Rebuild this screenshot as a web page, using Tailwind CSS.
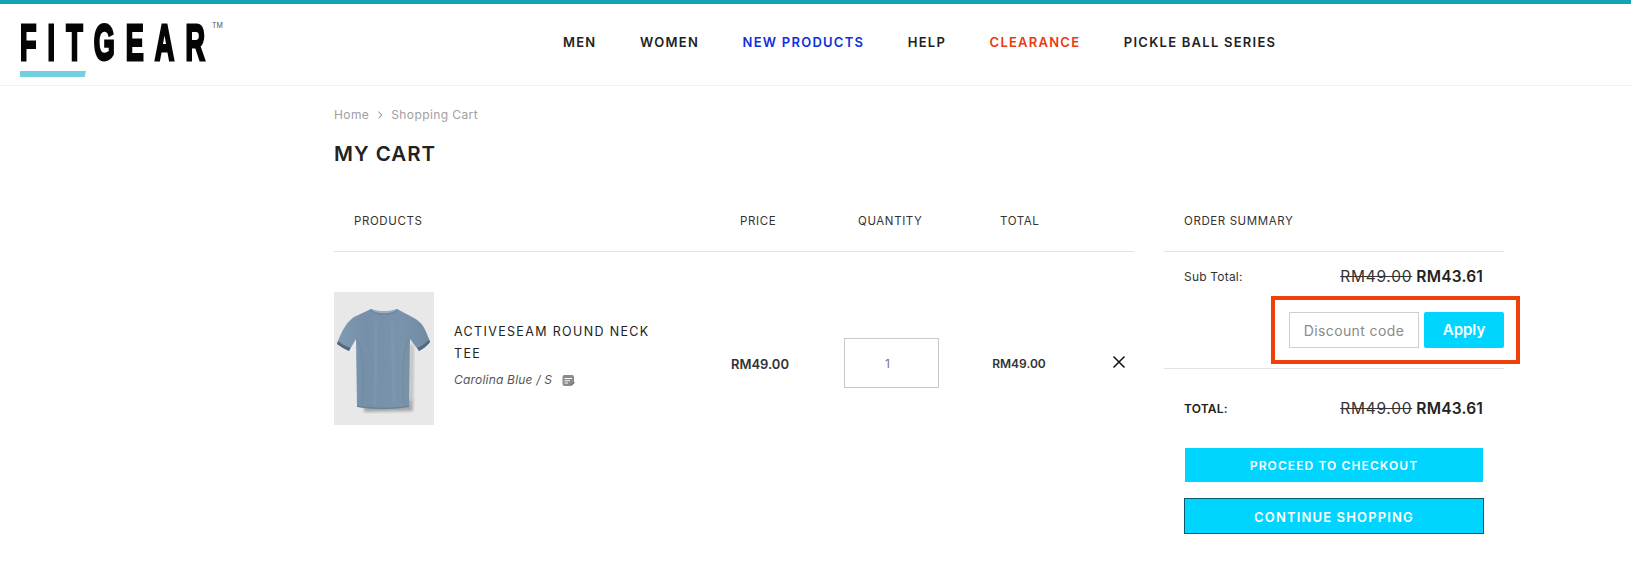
<!doctype html>
<html lang="en">
<head>
<meta charset="utf-8">
<title>My Cart</title>
<script src="https://cdn.jsdelivr.net/npm/@tailwindcss/browser@4"></script>
</head>
<body class="bg-white font-['Inter',sans-serif] text-[#222] overflow-hidden">
<div class="relative w-[1631px] h-[579px] overflow-hidden">
  <div class="h-1 bg-[#14a2b8]"></div>
  <header class="relative flex h-[82px] border-b border-[#f0f0f0]">
    <a class="relative block w-[320px] pl-[20px] pt-[10px]">
      <span class="block origin-left scale-x-[.54] w-[350px] whitespace-nowrap font-['Liberation_Sans',sans-serif] font-bold text-[50px] leading-[58px] tracking-[20.5px] text-[#050505] [-webkit-text-stroke:3px_#050505]">FITGEA<span class="tracking-normal">R</span></span>
      <span class="absolute left-[212px] top-[18px] text-[7px] leading-[8px] text-[#555]">TM</span>
      <span class="absolute left-[20px] top-[67px] w-[66px] h-[6px] bg-[#72d0e0] [clip-path:polygon(0_0,100%_0,98%_100%,0_100%)]"></span>
    </a>
    <nav class="flex items-center gap-[43.5px] pl-[243px] pb-[4px] text-[13px] font-semibold tracking-[1.25px] whitespace-nowrap">
      <a>MEN</a>
      <a>WOMEN</a>
      <a class="text-[#0f2fdc]">NEW PRODUCTS</a>
      <a>HELP</a>
      <a class="text-[#ea3a12]">CLEARANCE</a>
      <a>PICKLE BALL SERIES</a>
    </nav>
  </header>
  <main class="pl-[334px] w-[1631px]">
    <div class="flex items-center gap-[7px] pt-[21px] text-[12px] leading-[16px] tracking-[.4px] text-[#a0a0a0]">
      <span>Home</span>
      <svg class="w-[8px] h-[8px]" viewBox="0 0 8 8" fill="none" stroke="#777" stroke-width="1"><path d="M2.5 .8 5.8 4 2.5 7.2"/></svg>
      <span>Shopping Cart</span>
    </div>
    <h1 class="pt-[17px] text-[20.5px] leading-[28px] font-semibold tracking-[1px] text-[#222]">MY CART</h1>
    <div class="flex gap-[30px] pt-[28px]">
      <section class="w-[800px]">
        <div class="flex items-center h-[56px] pb-[4px] border-b border-[#e2e2e2] text-[11.5px] tracking-[.6px] text-[#333]">
          <span class="w-[406px] pl-[20px]">PRODUCTS</span>
          <span class="w-[118px]">PRICE</span>
          <span class="w-[142px]">QUANTITY</span>
          <span>TOTAL</span>
        </div>
        <div class="flex items-center pt-[40px]">
          <div class="w-[100px] h-[133px] bg-[#e8e8e8] shrink-0">
            <svg class="w-[100px] h-[133px]" viewBox="0 0 100 133">
              <defs>
                <linearGradient id="shirt" x1="0" x2="1" y1="0" y2="0">
                  <stop offset="0" stop-color="#7f9ab1"/>
                  <stop offset=".3" stop-color="#7590a8"/>
                  <stop offset=".7" stop-color="#7993ab"/>
                  <stop offset="1" stop-color="#708ba3"/>
                </linearGradient>
                <filter id="soft"><feGaussianBlur stdDeviation="1.8"/></filter>
                <filter id="photo"><feGaussianBlur stdDeviation=".35"/></filter>
              </defs>
              <path d="M30 112 78 108 79 119 30 120Z" fill="#8a8a8a" filter="url(#soft)" opacity=".7"/>
              <path d="M76 50 80 55 79 112 75 114Z" fill="#b5b5b5" filter="url(#soft)" opacity=".8"/>
              <g filter="url(#photo)">
                <path d="M37 17 C44 20 56 20 63 17 L80 26 C84 28 87 31 89 34 C92 39 94 44 96 50 C93 54 89 57 85 59 L76 47 L75 115 C60 118 38 118 23 115 L22 47 L15 59 C11 57 7 55 3 52 C5 45 8 39 12 33 C14 30 17 27 20 25Z" fill="url(#shirt)"/>
                <path d="M37 17 C44 20 56 20 63 17 L62 19 C55 22 45 22 38 19Z" fill="#9ab0c2"/>
                <path d="M37 17 C44 23 56 23 63 17 L64 18 C56 25 44 25 36 18Z" fill="#668199" opacity=".6"/>
                <path d="M3 52 C7 55 11 57 15 59 L16.5 56 C12 54 7 52 4 49ZM96 50 C93 54 89 57 85 59 L83.5 56 C88 54 92 51 95 47.5Z" fill="#516a80"/>
                <path d="M23 114 C38 117 60 117 75 114" stroke="#667f96" stroke-width="1" fill="none"/>
                <path d="M23 47 C30 60 30 90 28 112M75 47 C68 60 68 90 70 112" stroke="#6b869e" stroke-width="1.5" fill="none" opacity=".5"/>
                <path d="M42 30 41 112M58 30 60 112" stroke="#86a0b6" stroke-width="3" fill="none" opacity=".35"/>
              </g>
            </svg>
          </div>
          <div class="w-[233px] pl-[20px] pb-[8px] shrink-0">
            <p class="text-[12.5px] leading-[22px] tracking-[1.35px] text-[#222]">ACTIVESEAM ROUND NECK TEE</p>
            <p class="flex items-center gap-[10px] pt-[7px] text-[12px] leading-[16px] tracking-[.2px] italic text-[#555]">
              Carolina Blue / S
              <svg class="w-[13px] h-[13px]" viewBox="0 0 13 13" fill="none">
                <rect x="0.5" y="1" width="11.5" height="11" rx="2" fill="#8b8b8b"/>
                <path d="M2.5 4.5h7.5M2.5 6.8h5.5M2.5 9h3.5" stroke="#fff" stroke-width="1"/>
                <path d="M7.5 12 12.5 7.5v3L10 13H7.5Z" fill="#fff"/>
                <path d="M8.5 11.8 12.3 8.2" stroke="#666" stroke-width="1.2"/>
              </svg>
            </p>
          </div>
          <span class="w-[177px] pl-[9px] pt-[12px] text-[13px] font-semibold text-center text-[#333]">RM49.00</span>
          <div class="w-[95px] h-[50px] mt-[9px] pt-[2px] border border-[#c8c8c8] flex items-center justify-center pr-[8px] text-[12px] text-[#777] shrink-0">1</div>
          <span class="w-[160px] pt-[11px] text-[12px] font-semibold text-center text-[#333]">RM49.00</span>
          <svg class="w-[14px] h-[14px] ml-[13px] mt-[7px]" viewBox="0 0 14 14" stroke="#111" stroke-width="1.5" fill="none"><path d="M1.5 1.5 12.5 12.5M12.5 1.5 1.5 12.5"/></svg>
        </div>
      </section>
      <aside class="relative w-[340px]">
        <div class="flex items-center h-[56px] pb-[4px] pl-[20px] border-b border-[#e2e2e2] text-[11.5px] tracking-[.6px] text-[#333]">ORDER SUMMARY</div>
        <div class="flex items-center justify-between h-[50px] pl-[20px] pr-[21px]">
          <span class="text-[12px] tracking-[.2px] text-[#333]">Sub Total:</span>
          <span class="text-[15.5px] font-semibold tracking-[.2px]"><s class="font-normal tracking-[.75px] text-[#333]">RM49.00</s> RM43.61</span>
        </div>
        <div class="flex justify-end gap-[5px] pt-[10px] pb-[20px] border-b border-[#e2e2e2]">
          <div class="flex items-center justify-center w-[130px] h-[36px] border border-[#cfcfcf] text-[14px] tracking-[.4px] text-[#8a8a8a]">Discount code</div>
          <button class="w-[80px] h-[36px] rounded-[2px] bg-[#00d5ff] text-white text-[15px] font-semibold">Apply</button>
        </div>
        <div class="flex items-center justify-between h-[79px] pl-[20px] pr-[21px]">
          <span class="text-[12px] tracking-[.2px] font-semibold text-[#222]">TOTAL:</span>
          <span class="text-[15.5px] font-semibold tracking-[.2px]"><s class="font-normal tracking-[.75px] text-[#333]">RM49.00</s> RM43.61</span>
        </div>
        <div class="pl-[20px] flex flex-col">
          <button class="ml-[1px] w-[298px] h-[34px] pt-[1px] bg-[#00d5ff] text-white text-[12px] font-semibold tracking-[1.1px]">PROCEED TO CHECKOUT</button>
          <button class="mt-[16px] w-[300px] h-[36px] pt-[3px] bg-[#00d5ff] border border-[#0b5a6b] text-white text-[13px] font-semibold tracking-[1.15px]">CONTINUE SHOPPING</button>
        </div>
        <div class="absolute left-[107px] top-[100px] w-[249px] h-[68px] border-[4px] border-[#f0400a]"></div>
      </aside>
    </div>
  </main>
</div>
</body>
</html>
